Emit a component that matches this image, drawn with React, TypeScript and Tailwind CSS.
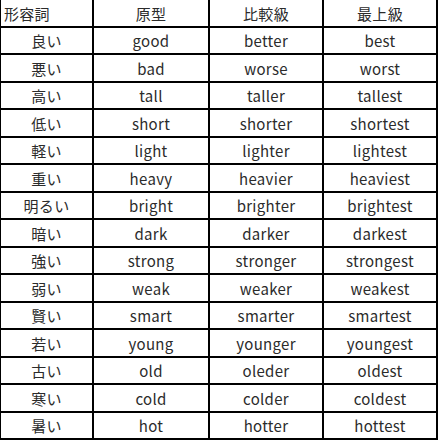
import React from 'react';

const rows: [string, string, string, string][] = [
  ['良い', 'good', 'better', 'best'],
  ['悪い', 'bad', 'worse', 'worst'],
  ['高い', 'tall', 'taller', 'tallest'],
  ['低い', 'short', 'shorter', 'shortest'],
  ['軽い', 'light', 'lighter', 'lightest'],
  ['重い', 'heavy', 'heavier', 'heaviest'],
  ['明るい', 'bright', 'brighter', 'brightest'],
  ['暗い', 'dark', 'darker', 'darkest'],
  ['強い', 'strong', 'stronger', 'strongest'],
  ['弱い', 'weak', 'weaker', 'weakest'],
  ['賢い', 'smart', 'smarter', 'smartest'],
  ['若い', 'young', 'younger', 'youngest'],
  ['古い', 'old', 'oleder', 'oldest'],
  ['寒い', 'cold', 'colder', 'coldest'],
  ['暑い', 'hot', 'hotter', 'hottest'],
];

const widths = ['w-[93px]', 'w-[116px]', 'w-[114px]', 'w-[114px]'];

const Row: React.FC<{ cells: string[]; tall: boolean; header?: boolean }> = ({ cells, tall, header }) => (
  <div className={`flex border-b-2 border-black ${tall ? 'h-[28px]' : 'h-[27px]'}`}>
    {cells.map((c, i) => (
      <div
        key={i}
        className={`${widths[i]} flex items-center border-r-2 border-black tracking-[0.3px] ${
          header && i === 0 ? 'justify-start pl-[3px]' : 'justify-center'
        }`}
      >
        {c}
      </div>
    ))}
  </div>
);

const App: React.FC = () => {
  return (
    <div
      className="w-[439px] h-[442px] bg-white text-[15px] text-[#2b2b2b] leading-none"
      style={{ fontFamily: '"Noto Sans CJK JP", "Noto Sans", sans-serif' }}
    >
      <div className="w-[438px] border-l border-black">
        <Row cells={['形容詞', '原型', '比較級', '最上級']} tall header />
        {rows.map((r, i) => (
          <Row key={r[0]} cells={r} tall={i % 2 === 1} />
        ))}
      </div>
    </div>
  );
};

export default App;
